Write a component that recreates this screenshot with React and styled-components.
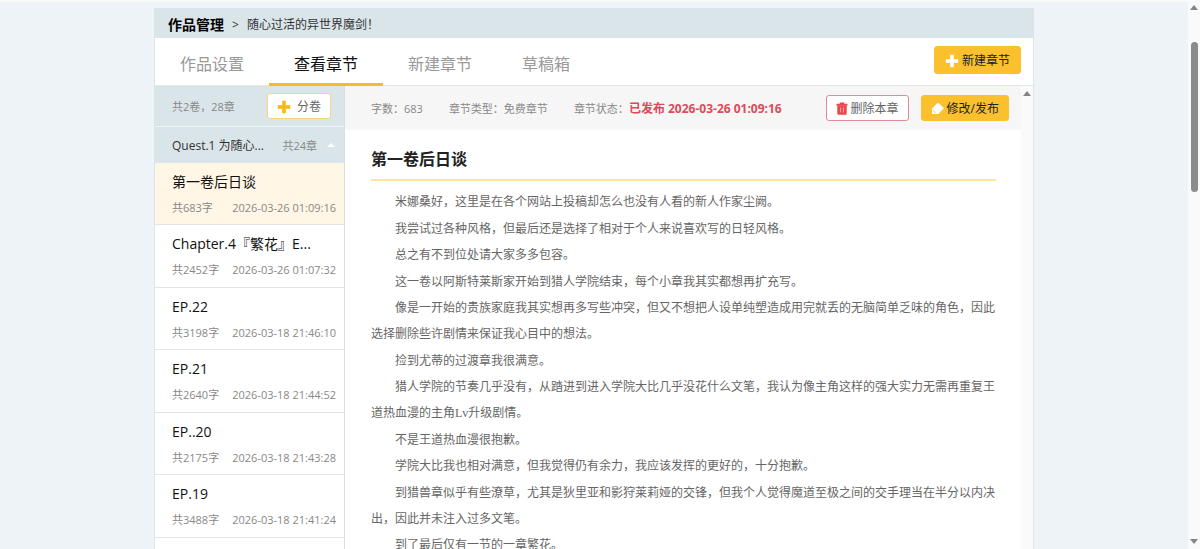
import React from 'react';
import styled, { createGlobalStyle } from 'styled-components';

const chapters = [
    { id: 1, title: '第一卷后日谈', words: 683, date: '2026-03-26 01:09:16', active: true },
    { id: 2, title: 'Chapter.4『繁花』E...', words: 2452, date: '2026-03-26 01:07:32' },
    { id: 3, title: 'EP.22', words: 3198, date: '2026-03-18 21:46:10' },
    { id: 4, title: 'EP.21', words: 2640, date: '2026-03-18 21:44:52' },
    { id: 5, title: 'EP..20', words: 2175, date: '2026-03-18 21:43:28' },
    { id: 6, title: 'EP.19', words: 3488, date: '2026-03-18 21:41:24' },
];

const paragraphs = [
    '米娜桑好，这里是在各个网站上投稿却怎么也没有人看的新人作家尘阙。',
    '我尝试过各种风格，但最后还是选择了相对于个人来说喜欢写的日轻风格。',
    '总之有不到位处请大家多多包容。',
    '这一卷以阿斯特莱斯家开始到猎人学院结束，每个小章我其实都想再扩充写。',
    '像是一开始的贵族家庭我其实想再多写些冲突，但又不想把人设单纯塑造成用完就丢的无脑简单乏味的角色，因此选择删除些许剧情来保证我心目中的想法。',
    '捡到尤蒂的过渡章我很满意。',
    '猎人学院的节奏几乎没有，从踏进到进入学院大比几乎没花什么文笔，我认为像主角这样的强大实力无需再重复王道热血漫的主角Lv升级剧情。',
    '不是王道热血漫很抱歉。',
    '学院大比我也相对满意，但我觉得仍有余力，我应该发挥的更好的，十分抱歉。',
    '到猎兽章似乎有些潦草，尤其是狄里亚和影狩莱莉娅的交锋，但我个人觉得魔道至极之间的交手理当在半分以内决出，因此并未注入过多文笔。',
    '到了最后仅有一节的一章繁花。',
];

const tabs = ['作品设置', '查看章节', '新建章节', '草稿箱'];

const PlusIcon = ({ color }) => (
    <svg width="14" height="14" viewBox="0 0 14 14" aria-hidden="true">
        <path d="M5.5 1h3v4.5H13v3H8.5V13h-3V8.5H1v-3h4.5z" fill={color} stroke={color} strokeWidth=".6" strokeLinejoin="round" />
    </svg>
)

const TrashIcon = () => (
    <svg width="12" height="13" viewBox="0 0 12 13" aria-hidden="true">
        <path d="M3.8.6h4.400v1.200h3.300v2H.5v-2h3.300z" fill="#e9474d" />
        <path d="M1.300 3.500h9.400v8.300a1 1 0 0 1-1 1H2.300a1 1 0 0 1-1-1z" fill="#e9474d" />
        <path d="M4.600 5.600v4.800M7.400 5.600v4.800" stroke="#f9c4c6" strokeWidth=".8" />
    </svg>
)

const PenIcon = () => (
    <svg width="13" height="13" viewBox="0 0 13 13" aria-hidden="true">
        <path d="M6.200 1.300a1.100 1.100 0 0 1 1.600 0l4.400 4.200a1.100 1.100 0 0 1 0 1.600L7.400 12H1.800a.8.800 0 0 1-.8-.8V6.600z" fill="#fff" />
        <path d="M1.800 8.700c1.300.1 2.200.9 2.400 2.300" fill="none" stroke="#fbc02d" strokeWidth=".8" />
    </svg>
)

const App = () => (
    <>
        <GlobalStyle />
        <Page>
            <Main>
                <Panel>
                    <Breadcrumb>
                        <strong>作品管理</strong>
                        <span>&gt;</span>
                        <span>随心过活的异世界魔剑！</span>
                    </Breadcrumb>
                    <TabBar>
                        {tabs.map(tab => <Tab key={tab} href="#" $active={tab === '查看章节'}>{tab}</Tab>)}
                        <NewButton><PlusIcon color="#fff" />新建章节</NewButton>
                    </TabBar>
                    <Body>
                        <Sidebar>
                            <Summary>
                                <span>共2卷，28章</span>
                                <VolumeButton><PlusIcon color="#f6bb12" />分卷</VolumeButton>
                            </Summary>
                            <Volume>
                                <VolumeName>Quest.1 为随心...</VolumeName>
                                <span>共24章</span>
                                <Caret />
                            </Volume>
                            <ChapterList>
                                {chapters.map(chapter => (
                                    <Chapter key={chapter.id} $active={chapter.active}>
                                        <ChapterTitle>{chapter.title}</ChapterTitle>
                                        <ChapterInfo>
                                            <span>{`共${chapter.words}字`}</span>
                                            <span>{chapter.date}</span>
                                        </ChapterInfo>
                                    </Chapter>
                                ))}
                            </ChapterList>
                        </Sidebar>
                        <Content>
                            <Meta>
                                <span>字数：683</span>
                                <span>章节类型：免费章节</span>
                                <span>章节状态：<Status>已发布 2026-03-26 01:09:16</Status></span>
                                <Actions>
                                    <DeleteButton><TrashIcon />删除本章</DeleteButton>
                                    <EditButton><PenIcon />修改/发布</EditButton>
                                </Actions>
                            </Meta>
                            <Article>
                                <Heading>第一卷后日谈</Heading>
                                {paragraphs.map(text => <Paragraph key={text}>{text}</Paragraph>)}
                            </Article>
                        </Content>
                        <Track>
                            <Arrow />
                        </Track>
                    </Body>
                </Panel>
            </Main>
            <Track>
                <Arrow />
                <Thumb />
                <Arrow $down />
            </Track>
        </Page>
    </>
)

export default App

const GlobalStyle = createGlobalStyle`
    * {
        box-sizing: border-box;
    }

    body {
        margin: 0;
        background: #edf3f6;
        font-family: "Open Sans", "Noto Sans CJK SC", sans-serif;
        font-size: 11px;
        color: #888;
    }
`

const Page = styled.div`
    display: flex;
    height: 100vh;
    overflow: hidden;
`

const Main = styled.main`
    flex: 1;
    display: flex;
    justify-content: center;
    padding-top: 6px;
    border-top: 2px solid #f8fbfc;
`

const Panel = styled.div`
    display: flex;
    flex-direction: column;
    width: 100%;
    max-width: 880px;
    background: #fff;
    border: solid #dae5ea;
    border-width: 0 1px;
`

const Breadcrumb = styled.nav`
    display: flex;
    flex-shrink: 0;
    align-items: center;
    gap: 8px;
    height: 30px;
    padding: 2px 13px 0;
    background: #dae5ea;
    font-size: 12px;
    color: #333;

    strong {
        font-size: 14px;
        color: #000;
    }
`

const TabBar = styled.div`
    display: flex;
    flex-shrink: 0;
    height: 48px;
    padding-right: 12px;
    border-bottom: 1px solid #e2e8ea;
`

const Tab = styled.a`
    height: 48px;
    padding: 0 25px;
    border-bottom: 3px solid ${({ $active }) => $active ? '#f6bb2c' : 'transparent'};
    font-size: 16px;
    line-height: 53px;
    color: ${({ $active }) => $active ? '#111' : '#999'};
    text-decoration: none;
`

const Button = styled.button`
    display: flex;
    align-items: center;
    justify-content: center;
    gap: 3px;
    height: 26px;
    padding: 1px 9px 0;
    border: 1px solid #fbc02d;
    border-radius: 3px;
    background: #fbc02d;
    font-family: inherit;
    font-size: 12px;
    line-height: 16px;
    color: #222;
    white-space: nowrap;
`

const NewButton = styled(Button)`
    height: 28px;
    margin: 8px 0 0 auto;
    padding: 2px 10px 0;
`

const VolumeButton = styled(Button)`
    gap: 6px;
    border-color: #f6d77f;
    background: #fff;
    color: #666;
`

const DeleteButton = styled(Button)`
    border-color: #e28a98;
    background: #fff;
    color: #666;
`

const EditButton = styled(Button)``

const Body = styled.div`
    flex: 1;
    display: flex;
    min-height: 0;
`

const Sidebar = styled.aside`
    width: 190px;
    overflow: hidden;
    border-right: 1px solid #d9dfe2;
`

const Summary = styled.div`
    display: flex;
    align-items: center;
    justify-content: space-between;
    height: 41px;
    padding: 0 13px 0 17px;
    border-bottom: 1px solid #edf3f6;
    background: #dae5ea;
`

const Volume = styled.div`
    display: flex;
    align-items: center;
    height: 36px;
    padding: 0 9px 0 17px;
    background: #dae5ea;
`

const VolumeName = styled.span`
    flex: 1;
    font-size: 12px;
    color: #333;
`

const Caret = styled.span`
    margin-left: 10px;
    border: solid transparent;
    border-width: 0 4px 4px;
    border-bottom-color: #fff;
`

const ChapterList = styled.ul`
    margin: 0;
    padding: 0;
    list-style: none;
`

const Chapter = styled.li`
    height: 62px;
    padding: 9px 8px 0 17px;
    border-bottom: 1px solid #e2e5e7;
    background: ${({ $active }) => $active ? '#fff6e6' : '#fff'};

    &:nth-child(even) {
        height: 63px;
    }
`

const ChapterTitle = styled.div`
    margin-bottom: 8px;
    font-size: 14px;
    line-height: 20px;
    color: #111;
`

const ChapterInfo = styled.div`
    display: flex;
    justify-content: space-between;
    line-height: 16px;
`

const Content = styled.section`
    flex: 1;
    min-width: 0;
    overflow: hidden;
`

const Meta = styled.div`
    display: flex;
    align-items: center;
    gap: 26px;
    height: 44px;
    padding: 0 12px 0 26px;
    background: #f6f6f6;
    white-space: nowrap;
`

const Status = styled.b`
    font-size: 12px;
    color: #dd4b5b;
`

const Actions = styled.div`
    display: flex;
    gap: 12px;
    margin-left: auto;
`

const Article = styled.article`
    padding: 14px 25px 14px 26px;
`

const Heading = styled.h1`
    margin: 0 0 8px;
    padding: 3px 0 8px;
    border-bottom: 2px solid #fde39c;
    font-size: 16px;
    line-height: 24px;
    color: #222;
`

const Paragraph = styled.p`
    margin: 0;
    font-family: "Liberation Serif", "Noto Sans CJK SC", serif;
    font-size: 12px;
    line-height: 26px;
    text-indent: 2em;
    color: #666;

    &:nth-child(odd) {
        margin-top: 1px;
    }
`

const Track = styled.div`
    display: flex;
    flex-direction: column;
    align-items: center;
    width: 12px;
    padding: 5px 0;
    background: #fafafa;
`

const Arrow = styled.span`
    margin-top: ${({ $down }) => $down ? 'auto' : '0'};
    border: 4px solid transparent;
    border-top: ${({ $down }) => $down ? '5px solid #858585' : '0'};
    border-bottom: ${({ $down }) => $down ? '0' : '5px solid #858585'};
`

const Thumb = styled.div`
    width: 7px;
    height: 150px;
    margin-top: 32px;
    border-radius: 4px;
    background: #8b8b8b;
`
